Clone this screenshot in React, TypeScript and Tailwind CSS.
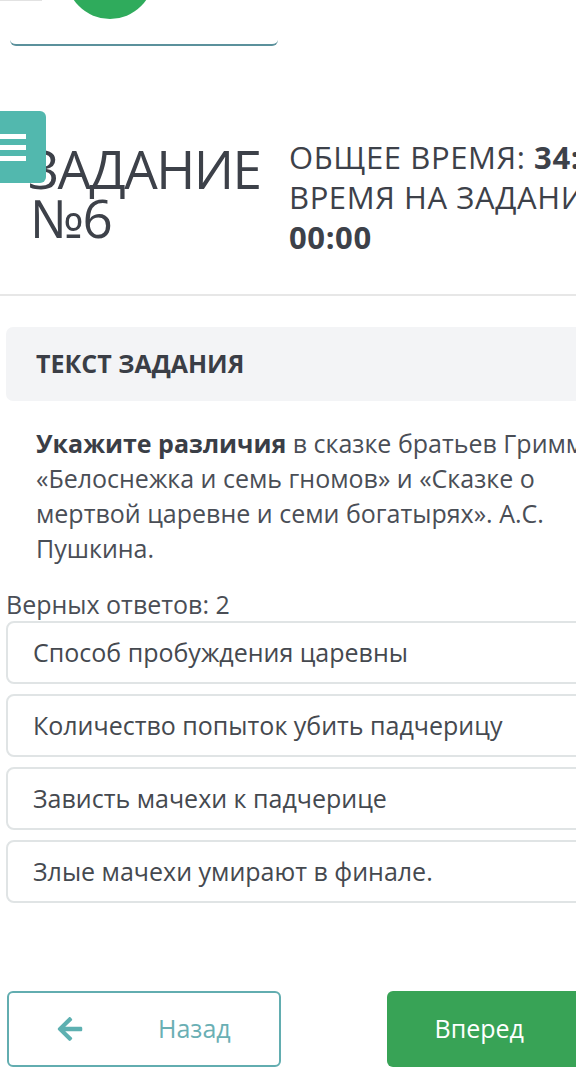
import { FaArrowLeft, FaArrowRight } from "react-icons/fa";

const answers = [
  "Способ пробуждения царевны",
  "Количество попыток убить падчерицу",
  "Зависть мачехи к падчерице",
  "Злые мачехи умирают в финале.",
];

export default function App() {
  return (
    <div className="w-[576px] min-h-[1072px] overflow-hidden bg-white">
      <div
        className="relative w-[668px] text-[#42464e]"
        style={{ fontFamily: '"Open Sans", "Noto Sans", sans-serif' }}
      >
        {/* --- top strip (cut off) --- */}
        <div className="relative h-[46px]">
          <div className="absolute left-0 top-0 h-px w-[42px] bg-[#e2e2e2]" />
          <div className="absolute left-[66px] top-[-69px] h-[88px] w-[88px] rounded-full bg-[#2fab5c]" />
          <div className="absolute left-[10px] top-0 h-[46px] w-[268px] rounded-b-[6px] border-b-2 border-[#5b919c]" />
        </div>

        {/* --- header --- */}
        <div className="mt-[91px] flex items-start">
          <div className="w-[287px] shrink-0 pl-[28px] pt-[7px] text-[53px] leading-[49px] tracking-[-1.5px] text-[#3d4149]">
            ЗАДАНИЕ
            <br />
            <span className="pl-[2px]">№6</span>
          </div>
          <div className="w-[365px] pl-[2px] text-[31px] leading-[40px] tracking-[0.6px] text-[#3d4149]">
            ОБЩЕЕ ВРЕМЯ: <b className="font-bold">34:52</b>
            <br />
            ВРЕМЯ НА ЗАДАНИЕ: <b className="font-bold">00:00</b>
          </div>
        </div>

        {/* menu button over the title */}
        <button className="absolute left-0 top-[111px] flex h-[72px] w-[46px] flex-col justify-center gap-[6px] rounded-r-[6px] bg-[#52b8ae]">
          <span className="block h-[5px] w-[26px] bg-white" />
          <span className="block h-[5px] w-[26px] bg-white" />
          <span className="block h-[5px] w-[26px] bg-white" />
        </button>

        <div className="mt-[37px] h-[2px] w-full bg-[#e7e7e7]" />

        {/* --- task text --- */}
        <div className="mx-[6px] mt-[31px] flex h-[74px] items-center rounded-[7px] bg-[#f3f4f6] px-[30px]">
          <span className="text-[25px] font-bold text-[#3a3e46]">ТЕКСТ ЗАДАНИЯ</span>
        </div>

        <p className="mt-[25px] w-[620px] pl-[36px] text-[25px] leading-[35px] text-[#4a4e56]">
          <b className="font-bold text-[#3a3e46]">Укажите различия</b> в сказке братьев Гримм
          «Белоснежка и семь гномов» и «Сказке о мертвой царевне и семи богатырях». А.С.
          Пушкина.
        </p>

        <div className="mt-[22px] px-[6px] text-[25px] leading-[32px] text-[#4a4e56]">
          Верных ответов: 2
        </div>

        <div className="mt-[1px] flex flex-col gap-[10px] px-[6px]">
          {answers.map((a) => (
            <div
              key={a}
              className="flex h-[63px] items-center rounded-[8px] border-2 border-[#e0e4e5] px-[25px] text-[25px] text-[#45494f]"
            >
              {a}
            </div>
          ))}
        </div>

        {/* --- navigation --- */}
        <div className="mt-[88px] flex justify-between px-[7px] pb-[6px]">
          <button className="flex h-[76px] w-[274px] items-center rounded-[6px] border-2 border-[#62adb0] bg-white pl-[47px] text-[25px] text-[#6aafb4]">
            <FaArrowLeft className="h-[28px] w-[28px] text-[#5db0b1]" />
            <span className="ml-[74px]">Назад</span>
          </button>
          <button className="flex h-[76px] w-[274px] items-center justify-end rounded-[6px] bg-[#38a356] pr-[47px] text-[25px] text-white">
            <span className="mr-[62px]">Вперед</span>
            <FaArrowRight className="h-[28px] w-[28px]" />
          </button>
        </div>
      </div>
    </div>
  );
}
